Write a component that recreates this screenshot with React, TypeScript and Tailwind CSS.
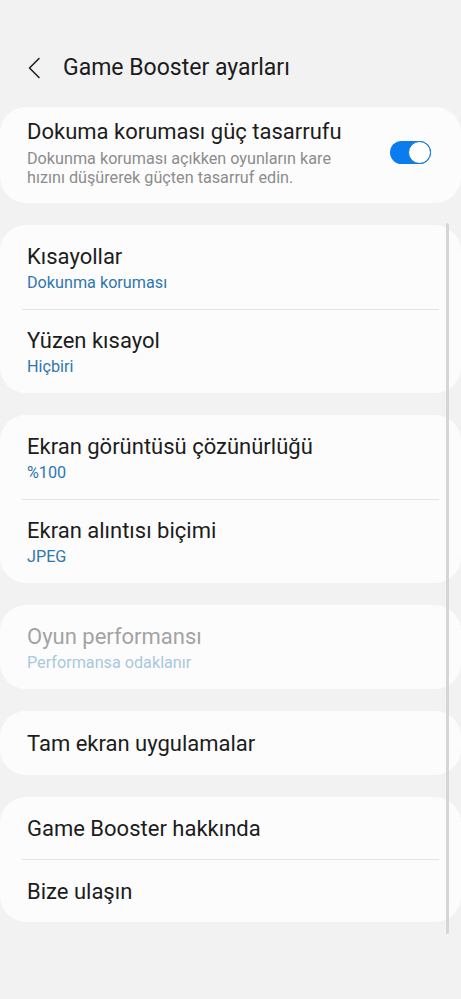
import type { ReactNode } from "react";

const font = { fontFamily: "Roboto, 'Noto Sans', sans-serif" };

function Card({ children }: { children: ReactNode }) {
  return <div className="rounded-[26px] bg-[#fcfcfc]">{children}</div>;
}

function Row({
  title,
  sub,
  disabled,
  h = "h-[84px]",
}: {
  title: string;
  sub?: string;
  disabled?: boolean;
  h?: string;
}) {
  return (
    <div className={`flex flex-col justify-center px-[27px] ${h} ${sub ? "pt-[1px]" : ""}`}>
      <div
        className={`text-[22px] leading-[27px] ${
          disabled ? "text-[#a3a3a3]" : "text-[#1c1c1c]"
        }`}
      >
        {title}
      </div>
      {sub && (
        <div
          className={`mt-[3px] text-[16.2px] leading-[20px] ${
            disabled ? "text-[#a9c8de]" : "text-[#2e77b0]"
          }`}
        >
          {sub}
        </div>
      )}
    </div>
  );
}

function Divider() {
  return <div className="mx-[22px] h-px bg-[#e4e4e4]" />;
}

export default function App() {
  return (
    <div
      className="relative min-h-[999px] w-[461px] bg-[#f2f2f2] antialiased"
      style={font}
    >
      {/* Header */}
      <div className="flex h-[107px] items-start pt-[50px]">
        <button className="ml-[27px] flex h-[36px] w-[16px] items-center">
          <svg width="14" height="22" viewBox="0 0 14 22" fill="none">
            <path
              d="M12 1.5 L2.5 11 L12 20.5"
              stroke="#222"
              strokeWidth="1.6"
              strokeLinecap="round"
              strokeLinejoin="round"
            />
          </svg>
        </button>
        <h1 className="ml-[20px] text-[23px] leading-[36px] font-normal text-[#1c1c1c]">
          Game Booster ayarları
        </h1>
      </div>

      <div className="flex flex-col gap-[22px]">
        {/* Touch protection power saving */}
        <Card>
          <div className="flex h-[96px] items-center pb-[6px] pl-[27px] pr-[30px]">
            <div className="flex-1">
              <div className="text-[22px] leading-[27px] text-[#1c1c1c]">
                Dokuma koruması güç tasarrufu
              </div>
              <div className="mt-[4px] text-[16.2px] leading-[19px] text-[#8c8c8c]">
                Dokunma koruması açıkken oyunların kare
                <br />
                hızını düşürerek güçten tasarruf edin.
              </div>
            </div>
            <div className="relative h-[23px] w-[41px] rounded-full bg-[#0a7cf0]">
              <div className="absolute right-0 top-0 h-[23px] w-[23px] rounded-full border-[1.5px] border-[#0a6fd6] bg-white" />
            </div>
          </div>
        </Card>

        <Card>
          <Row title="Kısayollar" sub="Dokunma koruması" />
          <Divider />
          <Row title="Yüzen kısayol" sub="Hiçbiri" h="h-[83px]" />
        </Card>

        <Card>
          <Row title="Ekran görüntüsü çözünürlüğü" sub="%100" />
          <Divider />
          <Row title="Ekran alıntısı biçimi" sub="JPEG" h="h-[83px]" />
        </Card>

        <Card>
          <Row title="Oyun performansı" sub="Performansa odaklanır" disabled />
        </Card>

        <Card>
          <Row title="Tam ekran uygulamalar" h="h-[64px]" />
        </Card>

        <Card>
          <Row title="Game Booster hakkında" h="h-[62px]" />
          <Divider />
          <Row title="Bize ulaşın" h="h-[62px]" />
        </Card>
      </div>

      {/* overlay scrollbar */}
      <div className="absolute left-[446px] top-[223px] h-[711px] w-[3px] rounded-full bg-[#d6d6d6]" />
    </div>
  );
}
